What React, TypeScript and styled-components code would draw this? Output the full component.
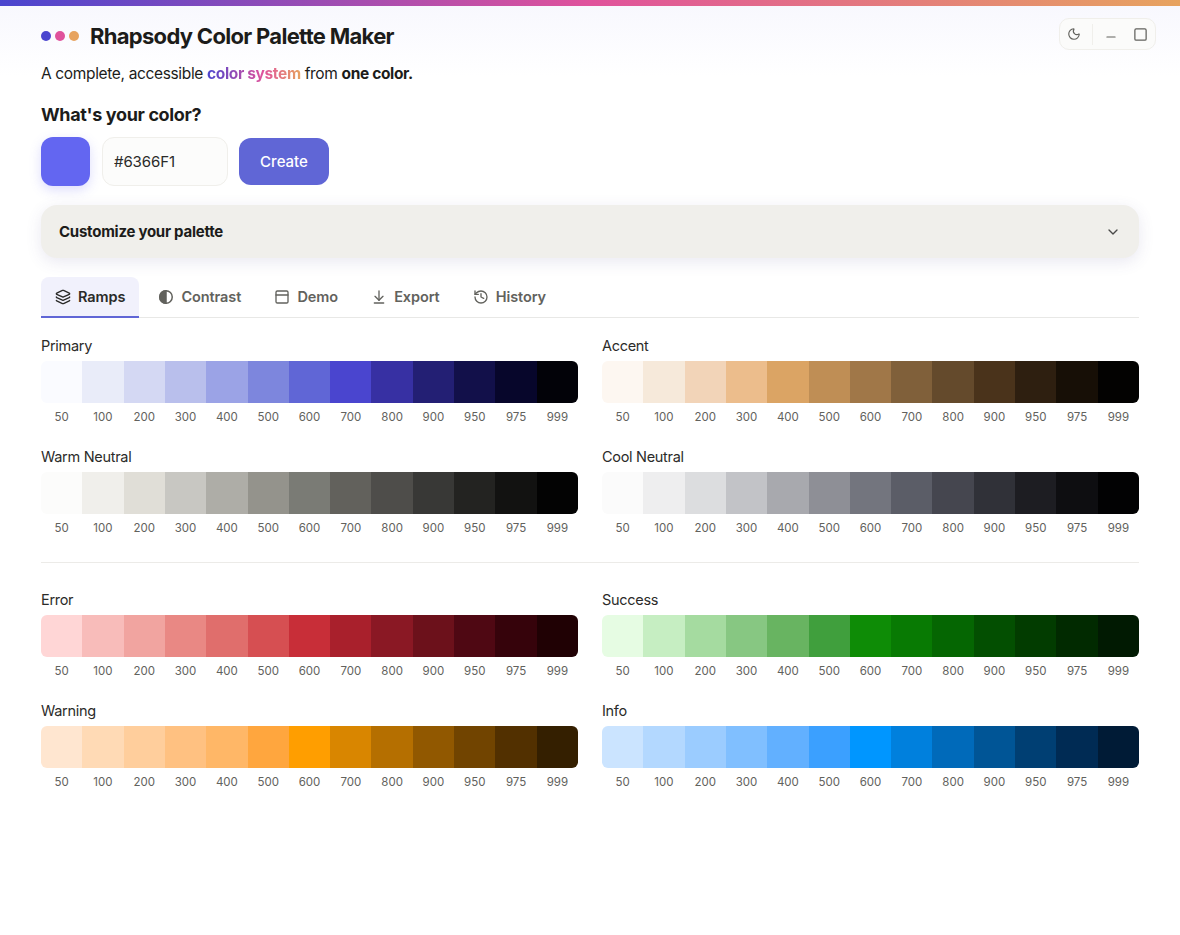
import styled, { createGlobalStyle } from 'styled-components'
import { ArrowDownToLine, ChevronDown, History, Layers, Minus, Moon, PanelTop, Square } from 'lucide-react'

type TRamp = {
  name: string,
  colors: string[]
}

const STEPS = ['50', '100', '200', '300', '400', '500', '600', '700', '800', '900', '950', '975', '999']

const BASE_RAMPS: TRamp[] = [
  { name: 'Primary', colors: ['#fafbff', '#e9ecf9', '#d4d8f3', '#b9bfec', '#9ba3e6', '#7d86dd', '#6066d6', '#4a45cf', '#3730a3', '#231f74', '#12104a', '#07062b', '#020208'] },
  { name: 'Accent', colors: ['#fdf7f1', '#f6e9da', '#f2d4b8', '#ecbd8c', '#dba464', '#bf8e55', '#a07748', '#80603a', '#644a2c', '#4a331b', '#2e1f10', '#170f06', '#030201'] },
  { name: 'Warm Neutral', colors: ['#fcfcfb', '#f0efeb', '#e0ded7', '#c8c7c2', '#aeada7', '#94938c', '#7a7b75', '#62615c', '#4e4d4a', '#383836', '#232321', '#121211', '#030303'] },
  { name: 'Cool Neutral', colors: ['#fbfbfb', '#eeeeef', '#dcdddf', '#c2c3c7', '#a8a9ae', '#8e8f96', '#73757e', '#5b5d67', '#45464f', '#303138', '#1d1d22', '#0e0e11', '#020203'] },
]

const STATUS_RAMPS: TRamp[] = [
  { name: 'Error', colors: ['#ffd6d6', '#f8bcba', '#f1a4a0', '#e98884', '#e06e6c', '#d64f52', '#c82e38', '#a9202c', '#8a1824', '#6c111b', '#4f0813', '#36030b', '#200104'] },
  { name: 'Success', colors: ['#e6fce3', '#c6eec2', '#a5dba0', '#87c782', '#68b461', '#409f3d', '#0e8c06', '#087a03', '#056602', '#034f01', '#023c00', '#012a00', '#011a02'] },
  { name: 'Warning', colors: ['#ffe6d0', '#ffdab5', '#ffce9c', '#ffc181', '#ffb767', '#ffa63e', '#ff9e00', '#d98600', '#b56f00', '#915800', '#714400', '#523000', '#341f00'] },
  { name: 'Info', colors: ['#cbe4ff', '#b3d8ff', '#9bccff', '#80bfff', '#62b0ff', '#3ba0ff', '#0096ff', '#0080dd', '#006aba', '#005596', '#003f73', '#002b54', '#001b36'] },
]

const TABS = [
  { label: 'Ramps', icon: <Layers size={16} /> },
  { label: 'Contrast', icon: <HalfCircle /> },
  { label: 'Demo', icon: <PanelTop size={16} /> },
  { label: 'Export', icon: <ArrowDownToLine size={16} /> },
  { label: 'History', icon: <History size={16} /> },
]

function HalfCircle() {
  return (
    <svg width="16" height="16" viewBox="0 0 16 16" fill="none" stroke="currentColor" strokeWidth="1.5">
      <circle cx="8" cy="8" r="6.25" />
      <path d="M8 1.75a6.25 6.25 0 0 0 0 12.5z" fill="currentColor" />
    </svg>
  )
}

function RampBlock({ ramp }: { ramp: TRamp }) {
  return (
    <Ramp>
      <RampName>{ramp.name}</RampName>
      <Swatches>
        {ramp.colors.map(color => <Swatch key={color} $color={color} />)}
      </Swatches>
      <Steps>
        {STEPS.map(step => <Step key={step}>{step}</Step>)}
      </Steps>
    </Ramp>
  )
}

export default function App() {
  return (
    <>
      <GlobalStyle />
      <TopBar />
      <Page>
        <WindowControls>
          <ControlButton><Moon size={14} /></ControlButton>
          <ControlDivider />
          <ControlButton $low><Minus size={14} /></ControlButton>
          <ControlButton><Square size={15} strokeWidth={2} /></ControlButton>
        </WindowControls>
        <Header>
          <Dots>
            <Dot $color="#4a45cf" />
            <Dot $color="#e0529c" />
            <Dot $color="#e7a35f" />
          </Dots>
          <Title>Rhapsody Color Palette Maker</Title>
        </Header>
        <Tagline>
          A complete, accessible <GradientText>color system</GradientText> from <strong>one color.</strong>
        </Tagline>
        <Question>What's your color?</Question>
        <ColorForm>
          <ColorChip />
          <HexInput defaultValue="#6366F1" />
          <CreateButton>Create</CreateButton>
        </ColorForm>
        <Customize>
          <span>Customize your palette</span>
          <ChevronDown size={16} color="#4a4a48" />
        </Customize>
        <Tabs>
          {TABS.map(tab => (
            <Tab key={tab.label} $active={tab.label === 'Ramps'}>
              {tab.icon}
              {tab.label}
            </Tab>
          ))}
        </Tabs>
        <RampGrid>
          {BASE_RAMPS.map(ramp => <RampBlock key={ramp.name} ramp={ramp} />)}
        </RampGrid>
        <Divider />
        <RampGrid>
          {STATUS_RAMPS.map(ramp => <RampBlock key={ramp.name} ramp={ramp} />)}
        </RampGrid>
      </Page>
    </>
  )
}

const GlobalStyle = createGlobalStyle`
  html, body {
    margin: 0;
    padding: 0;
    background: #fff;
  }
  body {
    font-family: Inter, "Liberation Sans", sans-serif;
    color: #1c1c1a;
  }
`

const TopBar = styled.div`
  height: 6px;
  background: linear-gradient(90deg, #4a45cf 0%, #e0529c 50%, #e7a35f 100%);
`

const Page = styled.main`
  position: relative;
  box-sizing: border-box;
  height: 929px;
  padding: 0 41px;
  background: linear-gradient(180deg, #f8f8fe 0, #ffffff 70px);
`

const WindowControls = styled.div`
  position: absolute;
  top: 12px;
  right: 24px;
  box-sizing: border-box;
  display: flex;
  align-items: center;
  width: 97px;
  height: 32px;
  padding: 0 6px;
  background: #fbfbfa;
  border: 1px solid #f0efeb;
  border-radius: 10px;
  color: #62625d;
`

const ControlButton = styled.span<{ $low?: boolean }>`
  display: flex;
  align-items: center;
  justify-content: center;
  width: 16px;
  margin-right: ${props => props.$low ? '13px' : '0'};
  padding-top: ${props => props.$low ? '6px' : '0'};
`

const ControlDivider = styled.span`
  width: 1px;
  height: 21px;
  margin: 0 10px 0 10px;
  background: #f0efeb;
`

const Header = styled.header`
  display: flex;
  align-items: center;
  gap: 11px;
  height: 30px;
  padding-top: 15px;
`

const Dots = styled.div`
  display: flex;
  gap: 4px;
`

const Dot = styled.span<{ $color: string }>`
  width: 10px;
  height: 10px;
  border-radius: 50%;
  background: ${props => props.$color};
`

const Title = styled.h1`
  margin: 0;
  font-size: 22px;
  font-weight: 700;
  letter-spacing: -0.7px;
`

const Tagline = styled.p`
  margin: 13px 0 0;
  font-size: 15.5px;
  line-height: 20px;
  letter-spacing: -0.35px;
  strong {
    font-weight: 700;
  }
`

const GradientText = styled.span`
  font-weight: 700;
  background: linear-gradient(90deg, #4a45cf, #e0529c 60%, #e7a35f);
  -webkit-background-clip: text;
  background-clip: text;
  color: transparent;
`

const Question = styled.h2`
  margin: 19px 0 0;
  font-size: 18px;
  line-height: 24px;
  font-weight: 700;
  letter-spacing: -0.35px;
`

const ColorForm = styled.div`
  display: flex;
  align-items: center;
  margin-top: 10px;
`

const ColorChip = styled.div`
  width: 49px;
  height: 49px;
  border-radius: 12px;
  background: #6366f1;
  box-shadow: 0 4px 12px rgba(99, 102, 241, 0.22);
`

const HexInput = styled.input`
  box-sizing: border-box;
  width: 126px;
  height: 49px;
  margin-left: 12px;
  padding: 0 11px;
  background: #fcfcfb;
  border: 1px solid #f0efeb;
  border-radius: 12px;
  font-family: inherit;
  font-size: 15px;
  letter-spacing: -0.1px;
  color: #2b2b29;
  outline: none;
`

const CreateButton = styled.button`
  width: 90px;
  height: 47px;
  margin-left: 11px;
  border: 0;
  border-radius: 12px;
  background: #6066d6;
  color: #fff;
  font-family: inherit;
  font-size: 15px;
  font-weight: 500;
`

const Customize = styled.section`
  display: flex;
  align-items: center;
  justify-content: space-between;
  box-sizing: border-box;
  height: 53px;
  margin-top: 19px;
  padding: 0 18px;
  background: #f0efeb;
  border-radius: 16px;
  font-size: 15px;
  font-weight: 700;
  letter-spacing: -0.25px;
  box-shadow: 0 4px 16px rgba(74, 69, 140, 0.12);
`

const Tabs = styled.nav`
  display: flex;
  gap: 5.2px;
  margin-top: 19px;
  border-bottom: 1px solid #e8e8e6;
`

const Tab = styled.div<{ $active?: boolean }>`
  display: flex;
  align-items: center;
  gap: 7px;
  box-sizing: border-box;
  height: 41px;
  margin-bottom: -1px;
  padding: 0 14px;
  border-radius: 8px 8px 0 0;
  border-bottom: 2px solid ${props => props.$active ? '#6066d6' : 'transparent'};
  background: ${props => props.$active ? '#f1f1fc' : 'transparent'};
  color: ${props => props.$active ? '#2a2a28' : '#62625d'};
  font-size: 14.5px;
  font-weight: 600;
  letter-spacing: -0.1px;
`

const RampGrid = styled.div`
  display: grid;
  grid-template-columns: 537px 537px;
  column-gap: 24px;
  row-gap: 22px;
  margin-top: 18px;
`

const Ramp = styled.div`
  display: flex;
  flex-direction: column;
`

const RampName = styled.div`
  font-size: 14.5px;
  line-height: 20px;
  letter-spacing: -0.3px;
  color: #2b2b29;
`

const Swatches = styled.div`
  display: grid;
  grid-template-columns: repeat(13, 1fr);
  height: 42px;
  margin-top: 5px;
  border-radius: 6px;
  overflow: hidden;
`

const Swatch = styled.div<{ $color: string }>`
  background: ${props => props.$color};
`

const Steps = styled.div`
  display: grid;
  grid-template-columns: repeat(13, 1fr);
  margin-top: 6px;
`

const Step = styled.span`
  font-size: 11.5px;
  line-height: 16px;
  text-align: center;
  color: #62625d;
`

const Divider = styled.hr`
  height: 1px;
  margin: 26px 0 27px;
  border: 0;
  background: #ecebe8;
  & + div {
    margin-top: 0;
  }
`
